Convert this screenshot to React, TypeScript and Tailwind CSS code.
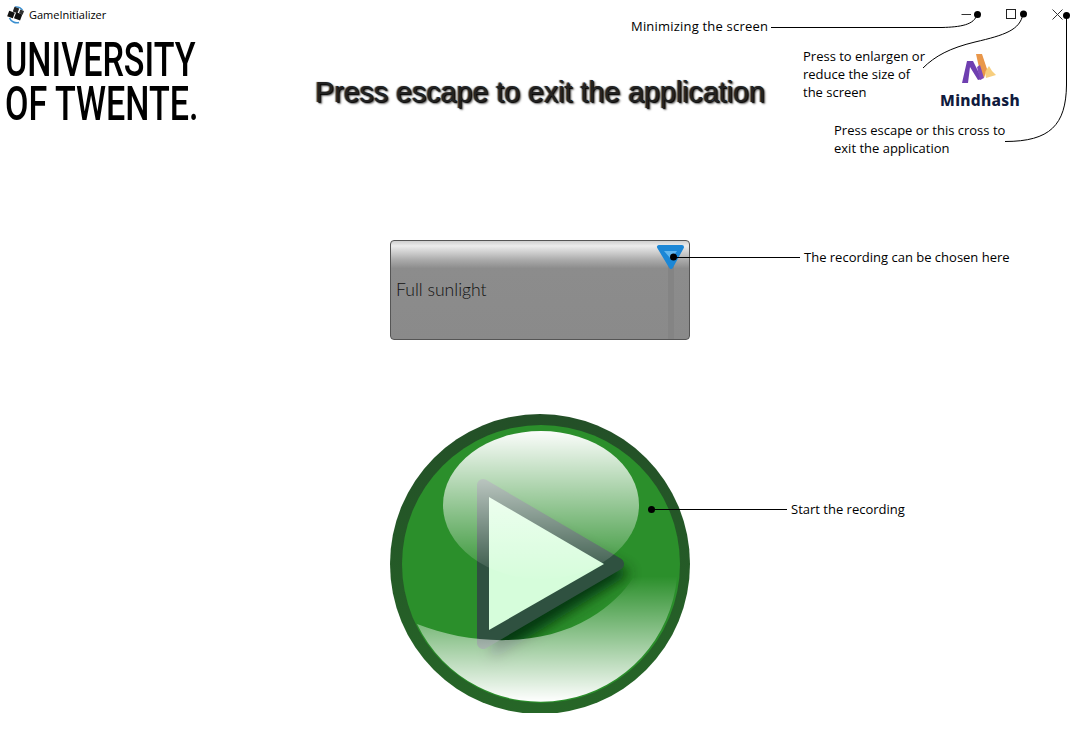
import React from 'react';

const note = "absolute font-['Open_Sans',sans-serif] text-[13px] leading-[18px] text-black whitespace-nowrap";

const WindowIcon: React.FC = () => (
  <svg width="18" height="18" viewBox="0 0 18 18" className="shrink-0">
    <path d="M2.500 12 A8 8 0 0 0 12 16.500" fill="none" stroke="#3b8fd0" strokeWidth="1.600" />
    <path d="M8 1 A8 8 0 0 1 15.500 4" fill="none" stroke="#3b8fd0" strokeWidth="1.400" />
    <rect x="6.500" y="1.500" width="5" height="5" fill="#222" transform="rotate(20 9 4)" />
    <rect x="1" y="5.500" width="6" height="6" fill="#111" transform="rotate(20 4 8.500)" />
    <rect x="8" y="7" width="6.500" height="6.500" fill="#111" transform="rotate(20 11 10)" />
    <rect x="12.500" y="4" width="4" height="4" fill="#333" transform="rotate(20 14 6)" />
  </svg>
);

const MindhashLogo: React.FC = () => (
  <svg width="36" height="32" viewBox="0 0 36 32">
    <path d="M14 1 L20 1 L25 16 L22 25 L18 19 Z" fill="#e9974a" />
    <path d="M23 19 L27 13 L30 18 L34 22 L24 25 Z" fill="#f6c667" opacity="0.85" />
    <path d="M0 30 L5 8 L11 8 L20 26 L16 27 L8 14 L6 30 Z" fill="#6f3fb0" />
    <path d="M15 14 L18 12 L22 25 L18 27 Z" fill="#7d4ab8" />
  </svg>
);

const PlayButton: React.FC = () => (
  <svg width="300" height="299" viewBox="390 414 300 299" className="block">
    <defs>
      <linearGradient id="rim" x1="0" y1="0" x2="0" y2="1">
        <stop offset="0" stopColor="#234f27" />
        <stop offset="1" stopColor="#266627" />
      </linearGradient>
      <linearGradient id="top" x1="0" y1="0" x2="0" y2="1">
        <stop offset="0" stopColor="#ffffff" stopOpacity="0.98" />
        <stop offset="0.55" stopColor="#ffffff" stopOpacity="0.45" />
        <stop offset="1" stopColor="#ffffff" stopOpacity="0.02" />
      </linearGradient>
      <linearGradient id="bottom" x1="0" y1="0" x2="0" y2="1">
        <stop offset="0" stopColor="#ffffff" stopOpacity="0" />
        <stop offset="1" stopColor="#ffffff" stopOpacity="1" />
      </linearGradient>
      <filter id="blur" x="-30%" y="-30%" width="160%" height="160%">
        <feGaussianBlur stdDeviation="7" />
      </filter>
    </defs>
    <circle cx="540" cy="564" r="150" fill="url(#rim)" />
    <circle cx="541" cy="564" r="139" fill="#2b8f2b" />
    <path d="M486 490 L626 566 L486 654 Z" fill="#062f0c" opacity="0.9" filter="url(#blur)" transform="translate(5 7)" />
    <path d="M483 485 L618 564 L483 643 Z" fill="#2f5140" stroke="#2f5140" strokeWidth="12" strokeLinejoin="round" />
    <path d="M489 497 L604 564 L489 630 Z" fill="#d6fddb" />
    <ellipse cx="541" cy="505" rx="98" ry="74" fill="url(#top)" />
    <path
      d="M417 624 C 470 645, 540 648, 590 618 C 610 606, 624 592, 633 578 C 648 575, 660 577, 677 577 A 137 137 0 0 1 417 624 Z"
      fill="url(#bottom)"
    />
  </svg>
);

export default function App() {
  return (
    <div className="relative w-[1080px] h-[750px] overflow-hidden bg-white text-black flex flex-col">
      {/* Title bar */}
      <div className="h-[30px] flex items-start gap-[4px] pl-[7px] pt-[6px]">
        <WindowIcon />
        <span className="font-['Open_Sans',sans-serif] text-[11px] leading-[18px]">GameInitializer</span>
      </div>

      {/* Logo and exit hint */}
      <div className="h-[100px] grid grid-cols-[1fr_auto_1fr]">
        <div className="pl-[5px] pt-[8px] font-['Roboto',sans-serif] font-medium text-[48px] leading-[44px] whitespace-nowrap w-[200px]">
          <div className="origin-left scale-x-[0.71]">UNIVERSITY</div>
          <div className="origin-left scale-x-[0.71]">OF TWENTE.</div>
        </div>
        <div className="pt-[44px] font-['Liberation_Sans',sans-serif] text-[28.600px] leading-[36px] text-[#222] [text-shadow:1px_1px_1px_#000,2px_2px_2px_#777,-1px_0_1px_#666]">
          Press escape to exit the application
        </div>
        <div />
      </div>

      {/* Main controls */}
      <div className="flex flex-col items-center pt-[110px]">
        <div className="relative w-[300px] h-[100px] rounded-[4px] border border-[#555] bg-[linear-gradient(#cfcfcf_0%,#ececec_5%,#a8a8a8_20%,#8c8c8c_28%,#8a8a8a_100%)] overflow-hidden flex items-center pl-[5px]">
          <span className="font-['Lato',sans-serif] font-light text-[17.600px] text-[#111]">Full sunlight</span>
          <div className="absolute right-[15px] top-[20px] bottom-0 w-[6px] bg-[#848484]" />
          <svg width="30" height="26" viewBox="0 0 30 26" className="absolute right-[3px] top-[3px]">
            <path d="M3 3 H26 L15 23 Z" fill="#1c87d6" stroke="#1c87d6" strokeWidth="4" strokeLinejoin="round" />
            <path d="M8 7 H21 L15 15 Z" fill="#63b7ee" />
          </svg>
        </div>
        <div className="mt-[74px]">
          <PlayButton />
        </div>
      </div>

      {/* Window controls and annotation lines */}
      <svg width="1080" height="750" viewBox="0 0 1080 750" className="absolute inset-0 pointer-events-none" fill="none">
        <path d="M961.500 14.500 H971" stroke="#333" />
        <rect x="1006.500" y="9.500" width="9" height="9" stroke="#222" />
        <path d="M1052.500 9.500 L1062.500 19.500 M1062.500 9.500 L1052.500 19.500" stroke="#333" />
        <g stroke="#000" strokeWidth="1">
          <path d="M771 27.500 H942 C 960 27, 975 25, 977 14" />
          <path d="M923 68 C 935 56, 950 48, 975 42 C 1005 35, 1020 30, 1023 14" />
          <path d="M1066.500 15 V 85 C 1066 125, 1050 141.500, 1005 141.500" />
          <path d="M673 257.500 H800" />
          <path d="M652 509.500 H787" />
        </g>
        <g fill="#000">
          <circle cx="977.500" cy="14.500" r="3.500" />
          <circle cx="1023.500" cy="14" r="3.500" />
          <circle cx="1066.500" cy="15.500" r="3.500" />
          <circle cx="673.500" cy="257" r="3.500" />
          <circle cx="651.500" cy="509.500" r="3.500" />
        </g>
      </svg>

      {/* Annotations */}
      <span className={`${note} left-[631px] top-[17px] tracking-[0.2px]`}>Minimizing the screen</span>
      <div className={`${note} left-[803px] top-[47px]`}>
        <div>Press to enlargen or</div>
        <div>reduce the size of</div>
        <div>the screen</div>
      </div>
      <div className={`${note} left-[834px] top-[121px]`}>
        <div>Press escape or this cross to</div>
        <div>exit the application</div>
      </div>
      <span className={`${note} left-[804px] top-[248px]`}>The recording can be chosen here</span>
      <span className={`${note} left-[791px] top-[500px]`}>Start the recording</span>

      {/* Mindhash logo */}
      <div className="absolute left-[930px] top-[53px] w-[100px] flex flex-col items-center">
        <MindhashLogo />
        <span className="font-['Noto_Sans',sans-serif] font-extrabold text-[15.500px] leading-[20px] tracking-[0.3px] text-[#101b3d] mt-[5px]">Mindhash</span>
      </div>
    </div>
  );
}
